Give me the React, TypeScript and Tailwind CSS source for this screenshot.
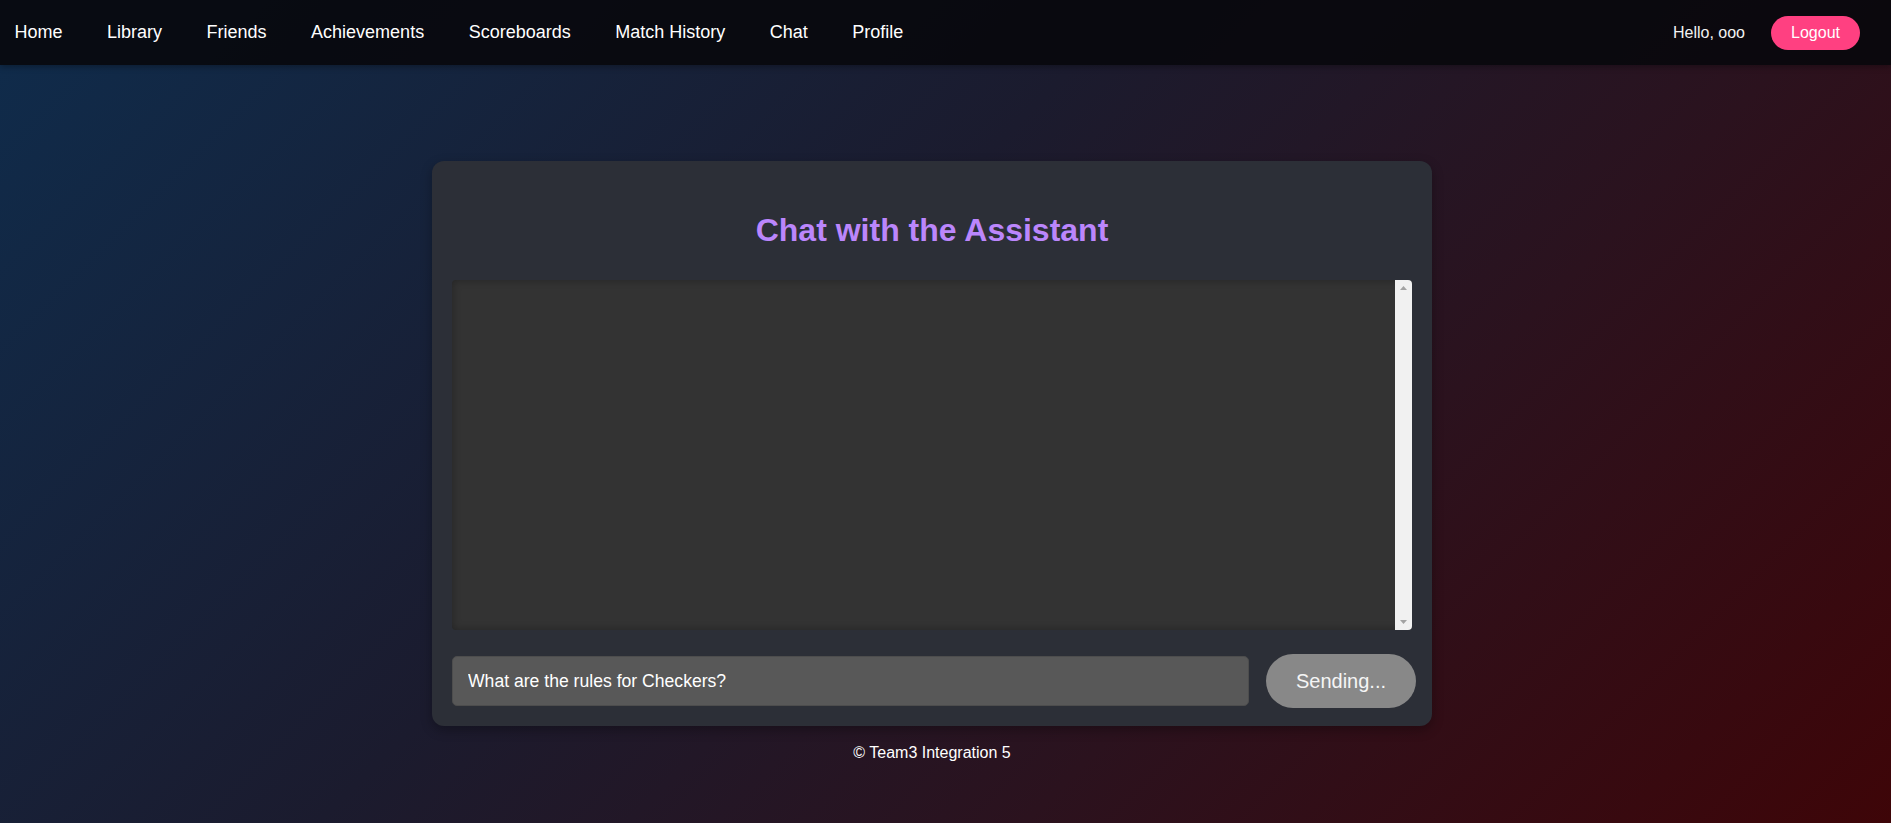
import { useState } from "react";

const links = ["Home", "Library", "Friends", "Achievements", "Scoreboards", "Match History", "Chat", "Profile"];

function Navbar() {
  return (
    <nav className="flex h-[65px] items-center justify-between bg-[rgba(8,8,12,0.9)] pl-[14.5px] pr-[31px] shadow-[0_2px_6px_rgba(0,0,0,0.3)]">
      <div className="flex items-center gap-[44.5px]">
        {links.map((l) => (
          <a key={l} href="#" className="text-[18px] leading-[21px] text-white">
            {l}
          </a>
        ))}
      </div>
      <div className="flex items-center gap-[26px]">
        <span className="text-[16px] text-[#f2f2f2]">Hello, ooo</span>
        <button className="h-[34px] w-[89px] rounded-full bg-[#ff4081] text-[16px] text-white">Logout</button>
      </div>
    </nav>
  );
}

function FakeScrollbar() {
  return (
    <div className="flex w-[17px] flex-col items-center justify-between bg-[#f1f1f1] py-[6px]">
      <svg width="7" height="4" viewBox="0 0 7 4">
        <polygon points="3.5,0 7,4 0,4" fill="#a3a3a3" />
      </svg>
      <svg width="7" height="4" viewBox="0 0 7 4">
        <polygon points="0,0 7,0 3.5,4" fill="#a3a3a3" />
      </svg>
    </div>
  );
}

export default function App() {
  const [text, setText] = useState("What are the rules for Checkers?");

  return (
    <div className="min-h-[823px] bg-[linear-gradient(135deg,#0f2c4c_0%,#1b1b2e_42%,#2b121e_68%,#3e0508_100%)] font-['Liberation_Sans',Arial,sans-serif]">
      <Navbar />
      <main className="flex flex-col items-center pr-[27px] pt-[96px]">
        <div className="w-[1000px] rounded-[12px] bg-[#2c2f37] px-[20px] pb-[18px] pt-[51px] shadow-[0_4px_12px_rgba(0,0,0,0.3)]">
          <h1 className="text-center text-[32px] font-bold leading-[37px] text-[#bb86fc]">Chat with the Assistant</h1>
          <div className="mt-[31px] flex h-[350px] overflow-hidden rounded-[4px] bg-[#333333] shadow-[inset_0_0_8px_rgba(0,0,0,0.3)]">
            <div className="flex-1" />
            <FakeScrollbar />
          </div>
          <div className="-mr-[4px] mt-[24px] flex items-center gap-[17px]">
            <input
              value={text}
              onChange={(e) => setText(e.target.value)}
              className="h-[50px] flex-1 rounded-[5px] border border-[#4d4d4d] bg-[#585858] px-[15px] text-[17.6px] text-white outline-none"
            />
            <button className="h-[54px] w-[150px] rounded-full bg-[#888888] text-[20px] text-[#f5f5f5]">Sending...</button>
          </div>
        </div>
        <footer className="mt-[18px] text-[16px] leading-[18px] text-white">© Team3 Integration 5</footer>
      </main>
    </div>
  );
}
